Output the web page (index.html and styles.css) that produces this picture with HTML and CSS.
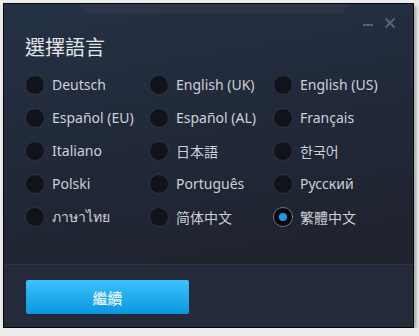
FILE: index.html
```html
<!DOCTYPE html>
<html lang="zh-Hant">
<head>
<meta charset="utf-8">
<link rel="stylesheet" href="styles.css">
</head>
<body>
<div class="window">
  <div class="tab"></div>
  <div class="controls">
    <svg class="ctl" width="12" height="12" viewBox="0 0 12 12"><rect x="1" y="7" width="10" height="2" fill="#5a616d"/></svg>
    <svg class="ctl" width="12" height="12" viewBox="0 0 12 12"><path d="M1.5 1.5 L10.5 10.5 M10.5 1.5 L1.5 10.5" stroke="#5a616d" stroke-width="2.2"/></svg>
  </div>
  <div class="main">
    <h1 class="title">選擇語言</h1>
    <div class="options">
      <label class="opt"><span class="radio"></span><span>Deutsch</span></label>
      <label class="opt"><span class="radio"></span><span>English (UK)</span></label>
      <label class="opt"><span class="radio"></span><span>English (US)</span></label>
      <label class="opt"><span class="radio"></span><span>Español (EU)</span></label>
      <label class="opt"><span class="radio"></span><span>Español (AL)</span></label>
      <label class="opt"><span class="radio"></span><span>Français</span></label>
      <label class="opt"><span class="radio"></span><span>Italiano</span></label>
      <label class="opt"><span class="radio"></span><span lang="ja">日本語</span></label>
      <label class="opt"><span class="radio"></span><span lang="ko">한국어</span></label>
      <label class="opt"><span class="radio"></span><span>Polski</span></label>
      <label class="opt"><span class="radio"></span><span>Português</span></label>
      <label class="opt"><span class="radio"></span><span>Русский</span></label>
      <label class="opt"><span class="radio"></span><span lang="th">ภาษาไทย</span></label>
      <label class="opt"><span class="radio"></span><span lang="zh-Hans">简体中文</span></label>
      <label class="opt"><span class="radio checked"></span><span>繁體中文</span></label>
    </div>
  </div>
  <div class="footer">
    <button class="btn">繼續</button>
  </div>
</div>
</body>
</html>
```
FILE: styles.css
```css
html, body {
  margin: 0;
  padding: 0;
}
body {
  background: #ededed;
  padding: 3px 0 0 3px;
  font-family: "Noto Sans", "Noto Sans CJK TC", sans-serif;
}
.window {
  position: relative;
  width: 409px;
  height: 323px;
  border: 1px solid #08090b;
  background: linear-gradient(170deg, #253245 0%, #212a3b 35%, #1f232e 75%);
  box-shadow: 2px 3px 4px rgba(0,0,0,0.35);
  display: flex;
  flex-direction: column;
}
.tab {
  position: absolute;
  left: 74px;
  top: 0;
  width: 271px;
  height: 9px;
  background: #2d3646;
  clip-path: polygon(0 0, 100% 0, 97.5% 100%, 3% 100%);
}
.controls {
  position: absolute;
  top: 13px;
  right: 17px;
  display: flex;
  gap: 10px;
}
.ctl { display: block; }
.main {
  height: 260px;
  padding: 31px 0 0 21px;
  box-sizing: border-box;
}
.title {
  margin: 0;
  font-size: 20px;
  line-height: 24px;
  font-weight: normal;
  color: #e4e6e9;
  font-family: "Noto Sans CJK TC", sans-serif;
}
.options {
  margin-top: 9px;
  display: grid;
  grid-template-columns: 124px 124px 124px;
  grid-auto-rows: 33px;
}
.opt {
  display: flex;
  align-items: center;
  gap: 7px;
  font-size: 14px;
  color: #cdd1d7;
  white-space: nowrap;
}
.opt [lang="ja"] { font-family: "Noto Sans CJK JP", sans-serif; }
.opt [lang="ko"] { font-family: "Noto Sans CJK KR", sans-serif; }
.opt [lang="zh-Hans"] { font-family: "Noto Sans CJK SC", sans-serif; }
.radio {
  width: 18px;
  height: 18px;
  border-radius: 50%;
  background: #10131a;
  border: 1px solid #2e343f;
  flex: none;
  display: flex;
  align-items: center;
  justify-content: center;
}
.radio.checked {
  background: #05070a;
  border-color: #707784;
}
.radio.checked::after {
  content: "";
  width: 8px;
  height: 8px;
  border-radius: 50%;
  background: #1a9ae6;
}
.footer {
  flex: 1;
  border-top: 1px solid #2e3546;
  background: #242a39;
  padding: 15px 0 0 22px;
}
.btn {
  width: 163px;
  height: 34px;
  border: none;
  border-radius: 2px;
  background: linear-gradient(#39c2fd, #0a97df);
  color: #ffffff;
  font-size: 15px;
  font-family: "Noto Sans CJK TC", sans-serif;
  padding: 0;
}
```
